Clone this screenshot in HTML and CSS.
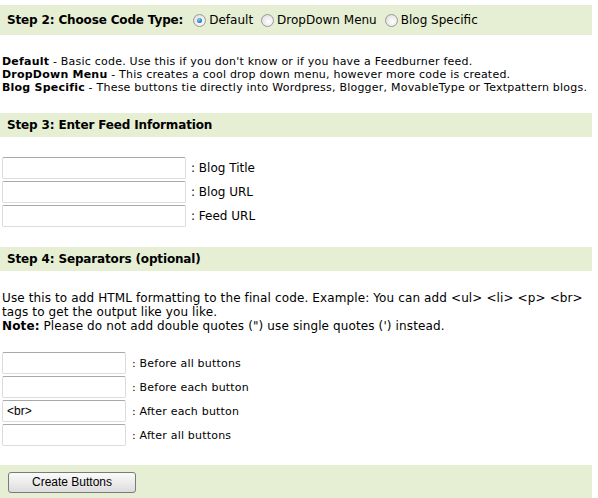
FILE: index.html
```html
<!DOCTYPE html>
<html>
<head>
<meta charset="utf-8">
<link rel="stylesheet" href="styles.css">
</head>
<body>
<div class="page">
  <div class="band band-tall">
    <span class="step">Step 2: Choose Code Type:</span>
    <label class="opt"><span class="radio checked"></span>Default</label>
    <label class="opt"><span class="radio"></span>DropDown Menu</label>
    <label class="opt"><span class="radio"></span>Blog Specific</label>
  </div>
  <div class="desc">
    <div><b>Default</b> - Basic code. Use this if you don't know or if you have a Feedburner feed.</div>
    <div><b>DropDown Menu</b> - This creates a cool drop down menu, however more code is created.</div>
    <div><b>Blog Specific</b> - These buttons tie directly into Wordpress, Blogger, MovableType or Textpattern blogs.</div>
  </div>

  <div class="band"><span class="step">Step 3: Enter Feed Information</span></div>
  <div class="fields fields-wide">
    <div class="row"><input class="field" type="text"><span class="lbl">: Blog Title</span></div>
    <div class="row"><input class="field" type="text"><span class="lbl">: Blog URL</span></div>
    <div class="row"><input class="field" type="text"><span class="lbl">: Feed URL</span></div>
  </div>

  <div class="band"><span class="step">Step 4: Separators (optional)</span></div>
  <div class="note">
    <div>Use this to add HTML formatting to the final code. Example: You can add &lt;ul&gt; &lt;li&gt; &lt;p&gt; &lt;br&gt;</div>
    <div>tags to get the output like you like.</div>
    <div><b>Note:</b> Please do not add double quotes (") use single quotes (') instead.</div>
  </div>
  <div class="fields fields-narrow">
    <div class="row"><input class="field" type="text"><span class="lbl">: Before all buttons</span></div>
    <div class="row"><input class="field" type="text"><span class="lbl">: Before each button</span></div>
    <div class="row"><input class="field" type="text" value="<br>"><span class="lbl">: After each button</span></div>
    <div class="row"><input class="field" type="text"><span class="lbl">: After all buttons</span></div>
  </div>

  <div class="band band-btn"><button class="btn" type="button">Create Buttons</button></div>
</div>
</body>
</html>
```

FILE: styles.css
```css
html, body {
  margin: 0;
  padding: 0;
  background: #ffffff;
}
body {
  font-family: "DejaVu Sans", Verdana, sans-serif;
  color: #000;
}
.page {
  width: 592px;
  padding-top: 5px;
}
.band {
  background: #e6efd3;
  height: 24px;
  display: flex;
  align-items: center;
  padding-left: 7px;
  box-sizing: border-box;
}
.band-tall {
  height: 30px;
}
.step {
  font-weight: bold;
  font-size: 12px;
  letter-spacing: -0.15px;
}
.band-tall .step {
  margin-right: 10px;
}
.opt {
  display: flex;
  align-items: center;
  font-size: 12px;
  margin-right: 8px;
}
.radio {
  width: 11px;
  height: 11px;
  border-radius: 50%;
  border: 1px solid #9a9a9a;
  background: radial-gradient(circle at 60% 60%, #ffffff 0%, #e8e8e8 60%, #cfcfcf 100%);
  margin-right: 3px;
  position: relative;
  flex: none;
}
.radio.checked::after {
  content: "";
  position: absolute;
  left: 3px;
  top: 3px;
  width: 5px;
  height: 5px;
  border-radius: 50%;
  background: radial-gradient(circle at 40% 35%, #8fd0f5 0%, #2a86c8 55%, #0b4f86 100%);
}
.desc {
  font-size: 11px;
  line-height: 13px;
  letter-spacing: 0.22px;
  padding-left: 2px;
  margin-top: 20px;
  margin-bottom: 19px;
}
.fields {
  display: flex;
  flex-direction: column;
  gap: 2px;
  padding-left: 2px;
  margin-top: 20px;
  margin-bottom: 20px;
}
.fields-narrow {
  margin-top: 19px;
  margin-bottom: 19px;
}
.row {
  display: flex;
  align-items: center;
}
.field {
  box-sizing: border-box;
  height: 22px;
  border: 1px solid #dcdcdc;
  border-top-color: #a8a8a8;
  border-radius: 2px;
  margin: 0;
  padding: 0 4px;
  font-family: "Liberation Sans", Arial, sans-serif;
  font-size: 12px;
  color: #000;
  background: #fff;
  outline: none;
}
.fields-wide .field {
  width: 184px;
}
.fields-narrow .field {
  width: 124px;
}
.lbl {
  margin-left: 5px;
}
.fields-wide .lbl {
  font-size: 12px;
}
.fields-narrow .lbl {
  font-size: 11px;
  letter-spacing: 0.2px;
  margin-left: 6px;
}
.note {
  font-size: 12px;
  line-height: 14px;
  letter-spacing: 0.12px;
  padding-left: 2px;
  margin-top: 20px;
}
.band-btn {
  height: 34px;
  padding-left: 8px;
}
.btn {
  width: 128px;
  height: 21px;
  border: 1px solid #7a7a7a;
  border-radius: 3px;
  background: linear-gradient(#fafafa 0%, #ececec 50%, #dcdcdc 100%);
  font-family: "Liberation Sans", Arial, sans-serif;
  font-size: 12px;
  color: #000;
  padding: 0;
  margin: 0;
}
```
